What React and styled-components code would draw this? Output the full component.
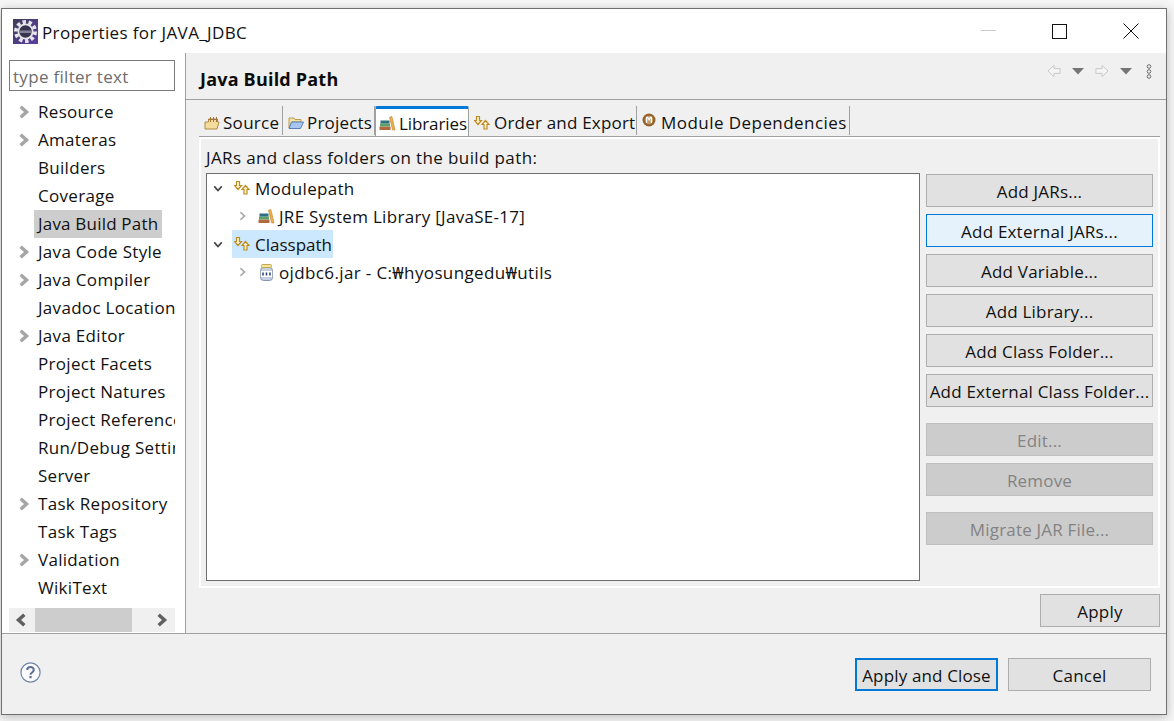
import React from "react";
import styled, { createGlobalStyle, css } from "styled-components";

const GlobalStyle = createGlobalStyle`
  html, body {
    margin: 0;
    padding: 0;
    background: #f7f7f7;
    overflow: hidden;
  }
  body {
    font-family: "Open Sans", "Noto Sans", "Noto Sans CJK KR", sans-serif;
    font-size: 17px;
    letter-spacing: 0.3px;
    color: #111;
  }
  svg {
    flex: none;
  }
`;

const Page = styled.div`
  width: 1174px;
  height: 721px;
  padding: 8px 0 0 1px;
  box-sizing: border-box;
`;

const Dialog = styled.div`
  width: 1166px;
  height: 707px;
  box-sizing: border-box;
  border: 1px solid #707070;
  background: #f0f0f0;
  display: flex;
  flex-direction: column;
  box-shadow: 0 2px 10px rgba(0, 0, 0, 0.25);
`;

const TitleBar = styled.div`
  height: 44px;
  background: #fff;
  display: flex;
  align-items: center;
  padding-left: 11px;
  flex: none;
`;

const TitleText = styled.div`
  margin-left: 4px;
  padding-top: 2px;
  flex: 1;
  letter-spacing: 0.37px;
`;

const WindowButton = styled.div`
  width: 71px;
  height: 44px;
  display: flex;
  align-items: center;
  justify-content: center;
`;

const Middle = styled.div`
  flex: 1;
  display: flex;
  min-height: 0;
`;

const Sidebar = styled.div`
  flex: none;
  background: #fff;
  border-right: 1px solid #a0a0a0;
  padding: 7px 10px 0 7px;
  box-sizing: content-box;
  width: 166px;
  display: flex;
  flex-direction: column;
`;

const Filter = styled.div`
  height: 29px;
  border: 1px solid #7a7a7a;
  color: #6d6d6d;
  line-height: 32px;
  padding-left: 3px;
  flex: none;
`;

const NavList = styled.div`
  margin-top: 7px;
  flex: 1;
  overflow: hidden;
`;

const NavRow = styled.div`
  height: 28px;
  display: flex;
  align-items: center;
  white-space: nowrap;
`;

const Twisty = styled.div`
  width: 25px;
  flex: none;
  display: flex;
  justify-content: center;
  padding-left: 3px;
  box-sizing: border-box;
`;

const NavLabel = styled.span`
  padding: 0 4px;
  line-height: 28px;
  ${(p) =>
    p.$selected &&
    css`
      background: #cdcdcd;
      letter-spacing: 0.2px;
    `}
`;

const HScroll = styled.div`
  height: 24px;
  margin-bottom: 1px;
  background: #f0f0f0;
  display: flex;
  align-items: center;
  justify-content: space-between;
  flex: none;
`;

const ScrollThumb = styled.div`
  width: 97px;
  height: 24px;
  background: #cdcdcd;
`;

const ArrowCell = styled.div`
  width: 26px;
  display: flex;
  justify-content: center;
  margin-right: ${(p) => (p.$end ? 1 : 0)}px;
`;

const Content = styled.div`
  flex: 1;
  display: flex;
  flex-direction: column;
  min-width: 0;
`;

const Header = styled.div`
  height: 47px;
  box-sizing: border-box;
  border-bottom: 1px solid #a0a0a0;
  display: flex;
  align-items: center;
  padding: 0 14px 0 14px;
  flex: none;
`;

const HeaderTitle = styled.h1`
  flex: 1;
  margin: 6px 0 0;
  font-size: 18px;
  font-weight: 700;
  letter-spacing: 0.2px;
  color: #0c0c0c;
`;

const HeaderTools = styled.div`
  display: flex;
  align-items: center;
  gap: 11px;
  margin-top: -10px;
`;

const TabArea = styled.div`
  flex: 1;
  display: flex;
  flex-direction: column;
  padding: 6px 6px 0 13px;
`;

const TabStrip = styled.div`
  display: flex;
  height: 30px;
  flex: none;
  border-bottom: 1px solid #a0a0a0;
`;

const Tab = styled.div`
  display: flex;
  align-items: center;
  height: 29px;
  box-sizing: border-box;
  padding: 4px 0 0 5px;
  gap: 3px;
  white-space: nowrap;
  border-right: 1px solid #a0a0a0;
  width: ${(p) => p.$w}px;
  letter-spacing: ${(p) => p.$ls}px;
  ${(p) =>
    p.$active &&
    css`
      background: #fff;
      height: 30px;
      border-top: 3px solid #0078d7;
      border-left: 1px solid #a0a0a0;
      border-radius: 2px 2px 0 0;
      padding: 1px 0 0 3px;
      margin-bottom: -1px;
    `}
`;

const TabPanel = styled.div`
  height: 451px;
  box-sizing: border-box;
  border: 2px solid #fff;
  padding: 4px 6px 5px 5px;
  display: flex;
  flex-direction: column;
  flex: none;
`;

const PanelLabel = styled.div`
  height: 30px;
  line-height: 30px;
  letter-spacing: 0.38px;
  flex: none;
`;

const PanelBody = styled.div`
  flex: 1;
  display: flex;
  gap: 6px;
  min-height: 0;
`;

const TreeBox = styled.div`
  width: 714px;
  box-sizing: border-box;
  border: 1px solid #6f6f6f;
  background: #fff;
  flex: none;
`;

const TreeRow = styled.div`
  height: 28px;
  display: flex;
  align-items: center;
  padding-left: ${(p) => p.$indent}px;
  white-space: nowrap;
`;

const TreeTwisty = styled.div`
  width: 19px;
  flex: none;
  display: flex;
  justify-content: center;
`;

const TreeLabel = styled.div`
  height: 28px;
  display: flex;
  align-items: center;
  gap: 4px;
  padding: 0 ${(p) => (p.$selected ? "1px 0 2px" : "0")};
  margin-left: ${(p) => (p.$selected ? 5 : 7)}px;
  letter-spacing: ${(p) => p.$ls ?? 0.3}px;
  ${(p) =>
    p.$selected &&
    css`
      background: #cce8ff;
      letter-spacing: 0;
    `}
`;

const ButtonColumn = styled.div`
  width: 227px;
  flex: none;
  display: flex;
  flex-direction: column;
  padding-top: 1px;
`;

const Btn = styled.div`
  height: 33px;
  box-sizing: border-box;
  flex: none;
  border: 1px solid #adadad;
  background: #e1e1e1;
  display: flex;
  align-items: center;
  justify-content: center;
  padding-top: 2px;
  letter-spacing: 0.2px;
  white-space: nowrap;
  margin-top: ${(p) => p.$gap ?? 7}px;
  ${(p) =>
    p.$hover &&
    css`
      background: #e5f1fb;
      border-color: #0078d7;
    `}
  ${(p) =>
    p.$disabled &&
    css`
      background: #cccccc;
      border-color: #bfbfbf;
      color: #838383;
    `}
  ${(p) =>
    p.$default &&
    css`
      border: 2px solid #0078d7;
      letter-spacing: 0.15px;
    `}
`;

const ApplyRow = styled.div`
  height: 46px;
  flex: none;
  display: flex;
  justify-content: flex-end;
  align-items: flex-start;
`;

const ApplyButton = styled(Btn)`
  width: 120px;
  margin-top: 6px;
`;

const Footer = styled.div`
  height: 81px;
  flex: none;
  box-sizing: border-box;
  border-top: 1px solid #a0a0a0;
  display: flex;
  align-items: flex-start;
  padding: 24px 15px 0 18px;
`;

const FooterSpacer = styled.div`
  flex: 1;
`;

const FooterButton = styled(Btn)`
  width: 143px;
  margin: 0 0 0 10px;
`;

const HelpWrap = styled.div`
  padding-top: 4px;
`;

const Chevron = ({ dir = "right", color = "#a6a6a6", size = 14, w = 3 }) => {
  const d = {
    right: "M4 1.5 L9 6 L4 10.5",
    left: "M8 1.5 L3 6 L8 10.5",
    down: "M1.5 4 L6 9 L10.5 4",
  }[dir];
  return (
    <svg width={size} height={size} viewBox="0 0 12 12">
      <path d={d} fill="none" stroke={color} strokeWidth={w} />
    </svg>
  );
};

const AppIcon = () => (
  <svg width="25" height="25" viewBox="0 0 25 25">
    <defs>
      <linearGradient id="appBg" x1="0" y1="0" x2="1" y2="1">
        <stop offset="0" stopColor="#3f3d55" />
        <stop offset="1" stopColor="#5b3ea6" />
      </linearGradient>
    </defs>
    <rect width="25" height="25" fill="url(#appBg)" />
    <circle cx="12.5" cy="12.5" r="9.6" fill="none" stroke="#e6e6ea" strokeWidth="3.8" strokeDasharray="3.4 2.6" />
    <circle cx="12.5" cy="12.5" r="8" fill="#e6e6ea" />
    <circle cx="12.5" cy="12.5" r="6.2" fill="#36344e" />
    <rect x="6.5" y="11.5" width="12" height="2.5" fill="#85839c" />
  </svg>
);

const OrderIcon = () => (
  <svg width="17" height="16" viewBox="0 0 17 16">
    <path d="M2.5 1.5h3v4h2l-3.5 4-3.5-4h2z" fill="#fff6d0" stroke="#c08a22" strokeWidth="1.2" />
    <path d="M11.5 5.5l3.5 4h-2v4.5h-3V9.5h-2z" fill="#fff6d0" stroke="#c08a22" strokeWidth="1.2" />
  </svg>
);

const LibraryIcon = () => (
  <svg width="17" height="15" viewBox="0 0 17 15">
    <rect x="0.5" y="10.5" width="11" height="3.5" fill="#b0683c" />
    <rect x="1" y="7.5" width="10" height="3" fill="#5ea06a" />
    <rect x="1.5" y="4.5" width="9" height="3" fill="#2f6f80" />
    <path d="M10.5 1.2l2.4-.7 3.1 13.5h-2.4z" fill="#eeb04a" stroke="#c08228" strokeWidth="0.6" />
  </svg>
);

const SourceIcon = () => (
  <svg width="16" height="14" viewBox="0 0 16 14">
    <path d="M1 6h3.5V3h9v3H15l-2 7H1z" fill="#f6dc9c" stroke="#b08a44" />
    <path d="M6.5 1v5M9.5 1v5M12.5 1v5M4.5 3.5h9" stroke="#a0743a" strokeWidth="1" fill="none" />
  </svg>
);

const ProjectIcon = () => (
  <svg width="16" height="14" viewBox="0 0 16 14">
    <path d="M1 2h5l1 1.5h6V6H4L1 12z" fill="#f4e2a8" stroke="#b89b50" />
    <path d="M3.5 6H15.5L12.5 12.5H1z" fill="#a9c6ef" stroke="#5a7fb8" />
  </svg>
);

const ModuleIcon = () => (
  <svg width="16" height="15" viewBox="0 -3 16 15" style={{ marginTop: -4 }}>
    <circle cx="7" cy="4" r="6.5" fill="#94622e" />
    <circle cx="7" cy="4" r="4.2" fill="#c69a66" />
    <path d="M4.6 7V1.4h1.1L7 3.6l1.3-2.2h1.1V7" fill="none" stroke="#fff" strokeWidth="1.3" />
  </svg>
);

const JarIcon = () => (
  <svg width="17" height="17" viewBox="-2 0 17 17">
    <rect x="0.5" y="3.5" width="12" height="13" rx="3" fill="#c4d0e2" stroke="#8895ad" />
    <rect x="1.5" y="0.5" width="10" height="3" rx="1" fill="#f5e49c" stroke="#c2a650" />
    <rect x="0.8" y="7" width="11.4" height="6" fill="#fff" />
    <path d="M3 8.4v3.2M6.5 8.4v3.2M10 8.4v3.2" stroke="#2e4a78" strokeWidth="1.6" />
  </svg>
);

const NavArrow = ({ flip }) => (
  <svg width="14" height="14" viewBox="0 0 15 14">
    <path
      d={flip ? "M1 4.5h6.5V1L14 7l-6.5 6V9.5H1z" : "M14 4.5H7.5V1L1 7l6.5 6V9.5H14z"}
      fill="#f5f5f5"
      stroke="#c4c4c4"
    />
  </svg>
);

const Caret = () => (
  <svg width="12" height="7" viewBox="0 0 12 7">
    <path d="M0 0h12L6 6.5z" fill="#757575" />
  </svg>
);

const MenuDots = () => (
  <svg width="6" height="15" viewBox="0 0 6 15" style={{ marginLeft: 3 }}>
    <circle cx="3" cy="2.5" r="1.8" fill="none" stroke="#6b6b6b" />
    <circle cx="3" cy="7.5" r="1.8" fill="none" stroke="#6b6b6b" />
    <circle cx="3" cy="12.5" r="1.8" fill="none" stroke="#6b6b6b" />
  </svg>
);

const HelpIcon = () => (
  <svg width="21" height="21" viewBox="0 0 21 21">
    <circle cx="10.5" cy="10.5" r="9.6" fill="#fbfbfd" stroke="#6f84a6" strokeWidth="1.2" />
    <path d="M7.2 8c0-4 6.6-4 6.6 0 0 2.6-3.3 2.4-3.3 4.8" fill="none" stroke="#5a6f94" strokeWidth="2" />
    <rect x="9.4" y="14" width="2.2" height="2.2" fill="#5a6f94" />
  </svg>
);

const navItems = [
  ["Resource", true],
  ["Amateras", true],
  ["Builders"],
  ["Coverage"],
  ["Java Build Path", false, true],
  ["Java Code Style", true],
  ["Java Compiler", true],
  ["Javadoc Location"],
  ["Java Editor", true],
  ["Project Facets"],
  ["Project Natures"],
  ["Project References"],
  ["Run/Debug Settings"],
  ["Server"],
  ["Task Repository", true],
  ["Task Tags"],
  ["Validation", true],
  ["WikiText"],
];

const tabs = [
  { label: "Source", icon: <SourceIcon />, w: 84, ls: 0.3 },
  { label: "Projects", icon: <ProjectIcon />, w: 92, ls: 0.2 },
  { label: "Libraries", icon: <LibraryIcon />, w: 94, ls: -0.1, active: true },
  { label: "Order and Export", icon: <OrderIcon />, w: 168, ls: 0.2 },
  { label: "Module Dependencies", icon: <ModuleIcon />, w: 213, ls: 0.45 },
];

export default function App() {
  return (
    <>
      <GlobalStyle />
      <Page>
        <Dialog>
          <TitleBar>
            <AppIcon />
            <TitleText>Properties for JAVA_JDBC</TitleText>
            <WindowButton>
              <svg width="15" height="2" viewBox="0 0 15 2">
                <rect width="15" height="1" fill="#c8c8c8" />
              </svg>
            </WindowButton>
            <WindowButton>
              <svg width="15" height="15" viewBox="0 0 15 15">
                <rect x="0.5" y="0.5" width="14" height="14" fill="none" stroke="#111" />
              </svg>
            </WindowButton>
            <WindowButton>
              <svg width="16" height="16" viewBox="0 0 16 16">
                <path d="M0.5 0.5L15.5 15.5M15.5 0.5L0.5 15.5" stroke="#111" />
              </svg>
            </WindowButton>
          </TitleBar>
          <Middle>
            <Sidebar>
              <Filter>type filter text</Filter>
              <NavList>
                {navItems.map(([label, arrow, selected]) => (
                  <NavRow key={label}>
                    <Twisty>{arrow && <Chevron />}</Twisty>
                    <NavLabel $selected={selected}>{label}</NavLabel>
                  </NavRow>
                ))}
              </NavList>
              <HScroll>
                <ArrowCell>
                  <Chevron dir="left" color="#606060" />
                </ArrowCell>
                <ScrollThumb />
                <FooterSpacer />
                <ArrowCell $end>
                  <Chevron dir="right" color="#606060" />
                </ArrowCell>
              </HScroll>
            </Sidebar>
            <Content>
              <Header>
                <HeaderTitle>Java Build Path</HeaderTitle>
                <HeaderTools>
                  <NavArrow />
                  <Caret />
                  <NavArrow flip />
                  <Caret />
                  <MenuDots />
                </HeaderTools>
              </Header>
              <TabArea>
                <TabStrip>
                  {tabs.map((t) => (
                    <Tab key={t.label} $w={t.w} $ls={t.ls} $active={t.active}>
                      {t.icon}
                      {t.label}
                    </Tab>
                  ))}
                </TabStrip>
                <TabPanel>
                  <PanelLabel>JARs and class folders on the build path:</PanelLabel>
                  <PanelBody>
                    <TreeBox>
                      <TreeRow $indent={1}>
                        <TreeTwisty>
                          <Chevron dir="down" color="#444" size={10} w={2} />
                        </TreeTwisty>
                        <TreeLabel>
                          <OrderIcon />
                          Modulepath
                        </TreeLabel>
                      </TreeRow>
                      <TreeRow $indent={25}>
                        <TreeTwisty>
                          <Chevron size={10} w={2} />
                        </TreeTwisty>
                        <TreeLabel>
                          <LibraryIcon />
                          JRE System Library [JavaSE-17]
                        </TreeLabel>
                      </TreeRow>
                      <TreeRow $indent={1}>
                        <TreeTwisty>
                          <Chevron dir="down" color="#444" size={10} w={2} />
                        </TreeTwisty>
                        <TreeLabel $selected>
                          <OrderIcon />
                          Classpath
                        </TreeLabel>
                      </TreeRow>
                      <TreeRow $indent={25}>
                        <TreeTwisty>
                          <Chevron size={10} w={2} />
                        </TreeTwisty>
                        <TreeLabel $ls={0.37}>
                          <JarIcon />
                          ojdbc6.jar - C:₩hyosungedu₩utils
                        </TreeLabel>
                      </TreeRow>
                    </TreeBox>
                    <ButtonColumn>
                      <Btn $gap={0}>Add JARs...</Btn>
                      <Btn $hover>Add External JARs...</Btn>
                      <Btn>Add Variable...</Btn>
                      <Btn>Add Library...</Btn>
                      <Btn>Add Class Folder...</Btn>
                      <Btn>Add External Class Folder...</Btn>
                      <Btn $gap={16} $disabled>Edit...</Btn>
                      <Btn $disabled>Remove</Btn>
                      <Btn $gap={16} $disabled>Migrate JAR File...</Btn>
                    </ButtonColumn>
                  </PanelBody>
                </TabPanel>
                <ApplyRow>
                  <ApplyButton>Apply</ApplyButton>
                </ApplyRow>
              </TabArea>
            </Content>
          </Middle>
          <Footer>
            <HelpWrap>
              <HelpIcon />
            </HelpWrap>
            <FooterSpacer />
            <FooterButton $default>Apply and Close</FooterButton>
            <FooterButton>Cancel</FooterButton>
          </Footer>
        </Dialog>
      </Page>
    </>
  );
}
